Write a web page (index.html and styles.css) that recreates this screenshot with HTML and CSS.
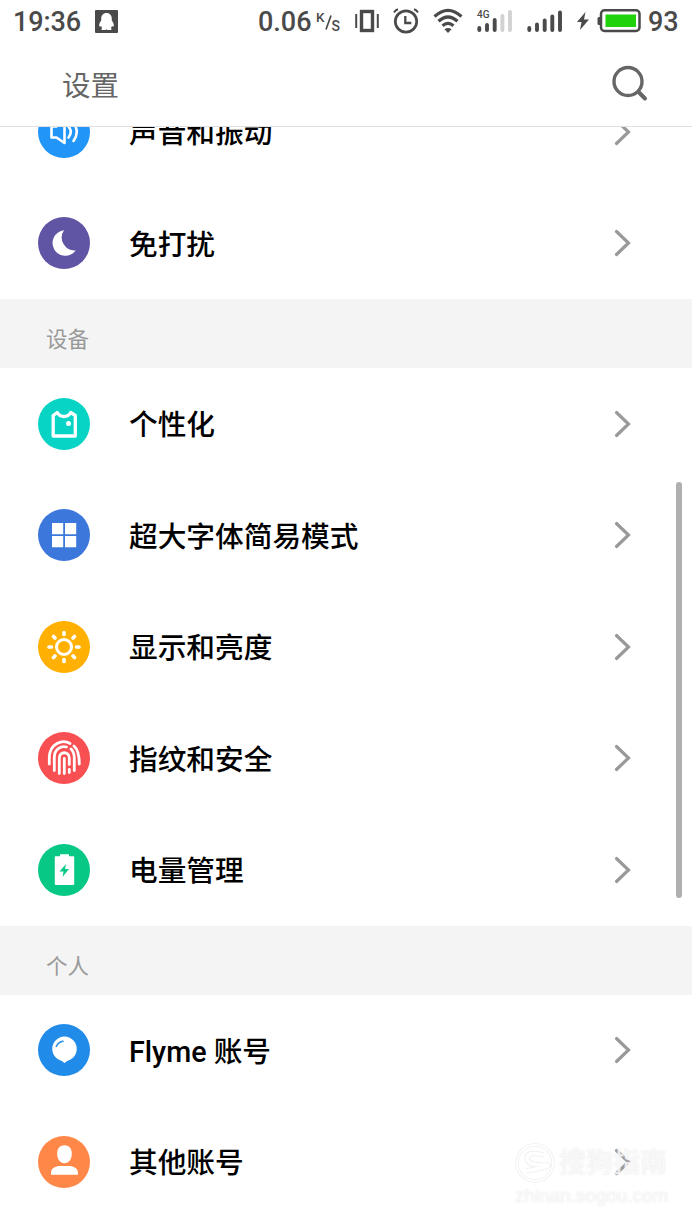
FILE: index.html
```html
<!DOCTYPE html>
<html lang="zh-CN">
<head>
<meta charset="utf-8">
<title>设置</title>
<link rel="stylesheet" href="styles.css">
</head>
<body>
<svg width="0" height="0" class="defs">
  <symbol id="chevron" viewBox="0 0 18 28"><path d="M2.500 2.500 14.500 14 2.500 25.500" fill="none" stroke="#999" stroke-width="3.200" stroke-linecap="round" stroke-linejoin="miter"/></symbol>
</svg>
<div class="screen">
  <header class="status">
    <span class="clock">19:36</span>
    <svg class="qq" width="23" height="23" viewBox="0 0 23 23"><rect width="23" height="23" rx="1" fill="#4a4a4a"/><path d="M11.500 3C8 3 6.200 5.500 6.200 8.500v2C5 12 4 14 4.200 16c.3.900 1.200.7 1.800 0 .2.800.6 1.500 1.200 2-1 .5-1.200 1.700 0 1.900h3.500l.8-.6.8.6h3.500c1.200-.2 1-1.400 0-1.900.6-.5 1-1.200 1.200-2 .6.700 1.500.9 1.800 0 .2-2-.8-4-2-5.500v-2C16.800 5.500 15 3 11.500 3z" fill="#fff"/></svg>
    <span class="speed">0.06</span>
    <span class="unit"><span class="unit-k">K</span><svg width="7" height="17" viewBox="0 0 7 17"><path d="M1 15.500 6 1.500" stroke="#4a4a4a" stroke-width="1.700"/></svg><span class="unit-s">S</span></span>
    <svg class="vibrate" width="24" height="24" viewBox="0 0 24 24"><g fill="none" stroke="#4a4a4a"><rect x="6.500" y="2.500" width="11" height="19" stroke-width="3.400"/><path d="M1.200 5v14M22.800 5v14" stroke-width="2"/></g></svg>
    <svg class="alarm" width="26" height="26" viewBox="0 0 26 26"><g fill="none" stroke="#4a4a4a"><circle cx="13" cy="13.500" r="10.700" stroke-width="2.700"/><path d="M12.300 8v7h6" stroke-width="2.300"/><path d="M1 4.500Q2.500 2 5 1.300M25 4.500Q23.500 2 21 1.300" stroke-width="2"/></g></svg>
    <svg class="wifi" width="30" height="26" viewBox="0 0 30 26"><g fill="none" stroke="#4a4a4a" stroke-width="3.200"><path d="M1.500 8.500Q15-3.800 28.500 8.500M5.500 13.300Q15 4.700 24.500 13.300M9.500 17.800Q15 12.800 20.500 17.800"/></g><path d="M11.500 21.300Q15 18.500 18.500 21.300L15 25z" fill="#4a4a4a"/></svg>
    <span class="cell"><span class="net">4G</span><svg width="36" height="23" viewBox="0 0 36 23"><g stroke="#4a4a4a" stroke-width="3.900" stroke-linecap="round"><path d="M2.300 18v2M10 15v5M17.700 10v10"/><path d="M25.400 6v14M33 2v18" stroke="#d2d2d2"/></g></svg></span>
    <svg class="signal" width="36" height="23" viewBox="0 0 36 23"><path d="M2.300 18v2M10 14.500v5.500M17.700 10.500v9.500M25.300 6.500v13.500M33 2.500v17.500" stroke="#4a4a4a" stroke-width="3.900" stroke-linecap="round"/></svg>
    <svg class="bolt" width="12" height="18" viewBox="0 0 12 18"><path d="M8.500 0 0 10h4.500L3 18 12 7.500H7z" fill="#4a4a4a"/></svg>
    <svg class="battery" width="45" height="24" viewBox="0 0 45 24"><rect x="4" y="1.300" width="38.500" height="20.700" rx="3.500" fill="#fff" stroke="#4a4a4a" stroke-width="2.500"/><path d="M3 8H2Q.5 8 .5 9.500v5Q.5 16 2 16h1z" fill="#4a4a4a"/><rect x="8.500" y="5.500" width="30.500" height="12.500" fill="#20d20c"/></svg>
    <span class="percent">93</span>
  </header>

  <div class="toolbar">
    <h1 class="title">设置</h1>
    <svg width="38" height="38" viewBox="0 0 38 38"><g fill="none" stroke="#666" stroke-linecap="round"><circle cx="17" cy="16.500" r="14" stroke-width="3.400"/><path d="M28 27.500 34 33.500" stroke-width="4"/></g></svg>
  </div>

  <main class="viewport">
    <div class="list">
      <section class="group">
        <div class="row">
          <svg class="icon" viewBox="0 0 52 52"><circle cx="26" cy="26" r="26" fill="#2196f8"/><g fill="none" stroke="#fff" stroke-width="2.600" stroke-linejoin="round" stroke-linecap="round"><path d="M13.500 20.500h5L26.500 14v23l-8-5.500h-5z"/><path d="M30.500 20.500q4.500 5.500 0 11M35.500 17q6.500 9 0 18"/></g></svg>
          <span class="label">声音和振动</span>
          <svg class="chevron"><use href="#chevron"/></svg>
        </div>
        <div class="row">
          <svg class="icon" viewBox="0 0 52 52"><circle cx="26" cy="26" r="26" fill="#6054a4"/><path d="M26 13.300A12.800 12.800 0 1 0 37.700 33.500 13 13 0 0 1 26 13.300z" fill="#fff"/></svg>
          <span class="label">免打扰</span>
          <svg class="chevron"><use href="#chevron"/></svg>
        </div>
      </section>

      <h2 class="heading">设备</h2>
      <section class="group">
        <div class="row">
          <svg class="icon" viewBox="0 0 52 52"><circle cx="26" cy="26" r="26" fill="#08d4c6"/><path d="M15.200 38V17.500L19.300 14.500Q21.500 18.500 26 18.500T32.700 14.500L37.300 17.500V38z" fill="none" stroke="#fff" stroke-width="3.300" stroke-linejoin="round"/><circle cx="30.500" cy="25.500" r="2.500" fill="#fff"/></svg>
          <span class="label">个性化</span>
          <svg class="chevron"><use href="#chevron"/></svg>
        </div>
        <div class="row">
          <svg class="icon" viewBox="0 0 52 52"><circle cx="26" cy="26" r="26" fill="#3c78dc"/><path d="M14 14h11.200v11.200H14zM27 14h11.200v11.200H27zM14 27h11.200v11.200H14zM27 27h11.200v11.200H27z" fill="#fff"/></svg>
          <span class="label">超大字体简易模式</span>
          <svg class="chevron"><use href="#chevron"/></svg>
        </div>
        <div class="row">
          <svg class="icon" viewBox="0 0 52 52"><circle cx="26" cy="26" r="26" fill="#ffb000"/><g fill="none" stroke="#fff" stroke-linecap="round"><circle cx="26" cy="26" r="7.500" stroke-width="3"/><path d="M26 11.500v2M26 38.500v2M11 26h2.500M38.500 26H41M15.500 15.500l1.500 1.500M35 35l1.500 1.500M15.500 36.500 17 35M35 17l1.500-1.500" stroke-width="3.700"/></g></svg>
          <span class="label">显示和亮度</span>
          <svg class="chevron"><use href="#chevron"/></svg>
        </div>
        <div class="row">
          <svg class="icon" viewBox="0 0 52 52"><circle cx="26" cy="26" r="26" fill="#f84f52"/><g fill="none" stroke="#fff" stroke-width="2.800" stroke-linecap="round"><path d="M11.300 32V26C11.300 11 25 7 32 11.500M36 14C39.500 17 41.300 21 41.300 32M16.300 38.500V26C16 17 23 13.500 28.500 15M33 17C35 19 36.300 22 36.300 26V38.500M21.300 41.500V26C21.300 19 31.300 19 31.300 26V32.500M31.300 37.500v3M26.300 41.500V26.500"/></g></svg>
          <span class="label">指纹和安全</span>
          <svg class="chevron"><use href="#chevron"/></svg>
        </div>
        <div class="row">
          <svg class="icon" viewBox="0 0 52 52"><circle cx="26" cy="26" r="26" fill="#08c885"/><path d="M17.500 12.300H22V10.300h9v2h4.500Q36.200 12.300 36.200 13v27q0 1-1 1H17.800Q16.800 41 16.800 40V13q0-.7.7-.7z" fill="#fff"/><path d="M28 20 21.500 27.500h4L24.500 33l6.500-8h-4z" fill="#08c885"/></svg>
          <span class="label">电量管理</span>
          <svg class="chevron"><use href="#chevron"/></svg>
        </div>
      </section>

      <h2 class="heading">个人</h2>
      <section class="group">
        <div class="row">
          <svg class="icon" viewBox="0 0 52 52"><circle cx="26" cy="26" r="26" fill="#208be8"/><path d="M26.500 39Q24 36.800 20.500 35.500A12.300 12.300 0 1 1 32.500 35.500Q29 36.800 26.500 39z" fill="#fff"/><path d="M18.300 22.500Q20.500 17.800 25 17.300" fill="none" stroke="#208be8" stroke-width="1.500" stroke-linecap="round"/></svg>
          <span class="label">Flyme 账号</span>
          <svg class="chevron"><use href="#chevron"/></svg>
        </div>
        <div class="row">
          <svg class="icon" viewBox="0 0 52 52"><circle cx="26" cy="26" r="26" fill="#ff8848"/><path d="M26.500 9.300c5 0 7.300 3.500 7.300 8.500 0 5.500-3 9.500-7.300 9.500s-7.300-4-7.300-9.500c0-5 2.300-8.500 7.300-8.500zM13 38.800V37c0-5 5-7 8.500-7h10c3.500 0 8.500 2 8.500 7v1.800z" fill="#fff"/></svg>
          <span class="label">其他账号</span>
          <svg class="chevron"><use href="#chevron"/></svg>
        </div>
      </section>
    </div>
    <div class="scrollbar"></div>
    <div class="watermark">
      <div class="brand">
        <svg width="40" height="40" viewBox="0 0 40 40"><g fill="none"><circle cx="20" cy="20" r="18" stroke="#f0f0f0" stroke-width="3.500"/><circle cx="20" cy="20" r="18" stroke="#fff" stroke-width="1.800"/><path d="M29 12Q12 8 12 15T28 22 11 28" stroke="#f0f0f0" stroke-width="5.500"/><path d="M29 12Q12 8 12 15T28 22 11 28" stroke="#fff" stroke-width="3.500"/></g></svg>
        <span class="brand-name">搜狗指南</span>
      </div>
      <div class="brand-url">zhinan.sogou.com</div>
    </div>
  </main>
</div>
</body>
</html>
```
FILE: styles.css
```css
* { box-sizing: border-box; }

body {
  margin: 0;
  background: #fff;
  font-family: Roboto, "Noto Sans CJK SC", sans-serif;
}

.defs { position: absolute; }

.screen {
  display: flex;
  flex-direction: column;
  width: 692px;
  height: 1230px;
  overflow: hidden;
}

.status {
  display: flex;
  flex: none;
  align-items: center;
  height: 42px;
  padding-left: 13px;
  color: #4a4a4a;
  font-size: 27px;
  font-weight: 500;
  line-height: 42px;
  white-space: nowrap;
}

.status svg { flex: none; }
.clock { width: 82px; padding-top: 2px; letter-spacing: -0.1px; }
.speed { width: 58px; margin-left: 140px; padding-top: 2px; }
.unit { display: flex; width: 24px; height: 22px; line-height: 14px; font-size: 13.5px; }
.unit svg { margin: 4px 0 0 0; }
.unit-k { width: 9px; }
.unit-s { padding-top: 9px; font-size: 14px; }
.vibrate { margin-left: 15px; }
.alarm { margin-left: 14px; }
.wifi { margin-left: 14px; }
.cell { position: relative; width: 36px; height: 23px; margin-left: 14px; }
.cell svg { display: block; }
.net {
  position: absolute;
  top: -1px;
  left: 0;
  font-size: 10px;
  line-height: 11px;
}
.signal { margin-left: 14px; }
.bolt { margin-left: 14px; }
.battery { margin-left: 8px; }
.percent { margin-left: 6px; padding-top: 2px; }

.toolbar {
  display: flex;
  flex: none;
  align-items: center;
  justify-content: space-between;
  height: 85px;
  padding: 0 43px 0 62px;
  border-bottom: 1px solid #e0e0e0;
}

.title {
  margin: 0;
  padding-top: 5px;
  color: #666;
  font-size: 28.5px;
  font-weight: 400;
  line-height: 42px;
}

.viewport {
  position: relative;
  flex: 1;
  min-height: 0;
  overflow: hidden;
}

.list { margin-top: -51px; }

.row {
  display: flex;
  align-items: center;
  height: 111.5px;
  padding: 0 60px 0 38px;
}

.icon { flex: none; width: 52px; height: 52px; }

.label {
  flex: 1;
  margin-left: 39px;
  padding-top: 3px;
  color: #000;
  font-size: 28.7px;
  font-weight: 500;
  line-height: 42px;
}

.chevron { flex: none; width: 18px; height: 28px; }

.heading {
  height: 69px;
  margin: 0;
  padding: 6px 0 0 46px;
  background: #f4f4f4;
  color: #999;
  font-size: 21.5px;
  font-weight: 400;
  line-height: 69px;
}

.scrollbar {
  position: absolute;
  top: 355px;
  right: 10px;
  width: 6px;
  height: 416px;
  border-radius: 3px;
  background: #b0b0b0;
}

.watermark {
  position: absolute;
  right: 20px;
  bottom: 22px;
  width: 157px;
  color: rgba(255, 255, 255, 0.7);
  text-shadow: 0 0 2px rgba(215, 215, 215, 0.7);
}

.brand { display: flex; align-items: center; gap: 4px; height: 42px; }
.brand-name { font-size: 27px; font-weight: 500; line-height: 40px; white-space: nowrap; }
.brand-url { font: 18.500px/24px "Liberation Sans", sans-serif; letter-spacing: 0.2px; }
```
